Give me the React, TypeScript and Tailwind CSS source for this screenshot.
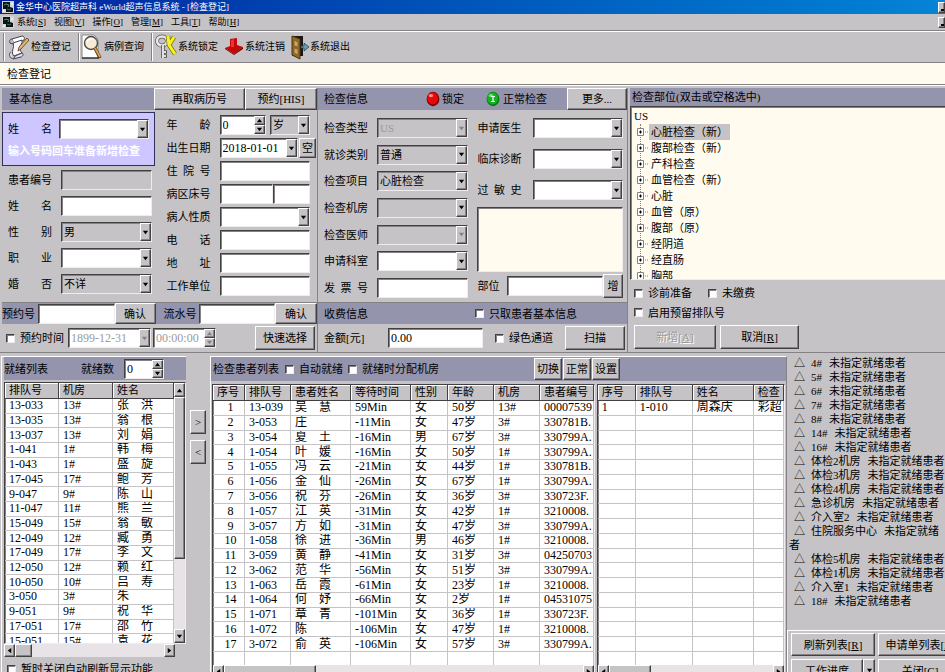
import { useState, type ReactNode } from "react";

const RAISED =
    "border border-t-white border-l-white border-b-[#424142] border-r-[#424142] bg-[#c6c3c6] shadow-[inset_-1px_-1px_0_#848284]";
const SUNKEN =
    "border border-t-[#424142] border-l-[#424142] border-b-[#efebef] border-r-[#efebef] shadow-[inset_1px_1px_0_#848284]";

const queueRows = [
    ["13-033", "13#", "张", "洪"],
    ["13-035", "13#", "翁", "根"],
    ["13-037", "13#", "刘", "娟"],
    ["1-041", "1#", "韩", "梅"],
    ["1-043", "1#", "盛", "旋"],
    ["17-045", "17#", "鲍", "芳"],
    ["9-047", "9#", "陈", "山"],
    ["11-047", "11#", "熊", "兰"],
    ["15-049", "15#", "翁", "敏"],
    ["12-049", "12#", "臧", "勇"],
    ["17-049", "17#", "李", "文"],
    ["12-050", "12#", "赖", "红"],
    ["10-050", "10#", "吕", "寿"],
    ["3-050", "3#", "朱", ""],
    ["9-051", "9#", "祝", "华"],
    ["17-051", "17#", "邵", "竹"],
    ["15-051", "15#", "袁", "花"],
];

const patientRows = [
    ["13-039", "吴", "慧", "59Min", "女", "50岁", "13#", "00007539"],
    ["3-053", "庄", "", "-11Min", "女", "47岁", "3#", "330781B."],
    ["3-054", "夏", "土", "-16Min", "男", "67岁", "3#", "330799A."],
    ["1-054", "叶", "媛", "-16Min", "女", "50岁", "1#", "330799A."],
    ["1-055", "冯", "云", "-21Min", "女", "44岁", "1#", "330781B."],
    ["1-056", "金", "仙", "-26Min", "女", "67岁", "1#", "330799A."],
    ["3-056", "祝", "芬", "-26Min", "女", "36岁", "3#", "330723F."],
    ["1-057", "江", "英", "-31Min", "女", "42岁", "1#", "3210008."],
    ["3-057", "方", "如", "-31Min", "女", "47岁", "3#", "330799A."],
    ["1-058", "徐", "进", "-36Min", "男", "46岁", "1#", "3210008."],
    ["3-059", "黄", "静", "-41Min", "女", "31岁", "3#", "04250703"],
    ["3-062", "范", "华", "-56Min", "女", "51岁", "3#", "330799A."],
    ["1-063", "岳", "霞", "-61Min", "女", "23岁", "1#", "3210008."],
    ["1-064", "何", "妤", "-66Min", "女", "2岁", "1#", "04531075"],
    ["1-071", "章", "青", "-101Min", "女", "36岁", "1#", "330723F."],
    ["1-072", "陈", "", "-106Min", "女", "47岁", "1#", "3210008."],
    ["3-072", "俞", "英", "-106Min", "女", "57岁", "3#", "330799A."],
];

const treeItems = [
    "心脏检查（新）",
    "腹部检查（新）",
    "产科检查",
    "血管检查（新）",
    "心脏",
    "血管（原）",
    "腹部（原）",
    "经阴道",
    "经直肠",
    "胸部",
];

const notices = [
    "4#",
    "5#",
    "6#",
    "7#",
    "8#",
    "14#",
    "16#",
    "体检2机房",
    "体检3机房",
    "体检4机房",
    "急诊机房",
    "介入室2",
    "住院服务中心",
    "体检5机房",
    "体检1机房",
    "介入室1",
    "18#",
];

const menus = [
    ["系统", "S"],
    ["视图", "V"],
    ["操作", "O"],
    ["管理", "M"],
    ["工具", "T"],
    ["帮助", "H"],
];

function Btn({ children, className = "", disabled }: { children: ReactNode; className?: string; disabled?: boolean }) {
    return (
        <button
            disabled={disabled}
            className={`${RAISED} flex shrink-0 items-center justify-center whitespace-nowrap disabled:text-[#9c9a9c] disabled:[text-shadow:1px_1px_0_#fff] ${className}`}
        >
            {children}
        </button>
    );
}

function Caret({ dir = "down", muted }: { dir?: "up" | "down" | "left" | "right"; muted?: boolean }) {
    const points = {
        down: "1,2 7,2 4,6",
        up: "1,6 7,6 4,2",
        left: "6,1 6,7 2,4",
        right: "2,1 2,7 6,4",
    };
    return (
        <svg viewBox="0 0 8 8" className="h-[7px] w-[7px]">
            <polygon points={points[dir]} fill={muted ? "#848284" : "#000"} />
        </svg>
    );
}

function Combo({
    label,
    options = [""],
    gray,
    disabled,
    className = "flex-1",
}: {
    label: string;
    options?: string[];
    gray?: boolean;
    disabled?: boolean;
    className?: string;
}) {
    return (
        <div className={`${SUNKEN} relative h-5 min-w-0 ${gray ? "bg-[#c6c3c6]" : "bg-white"} ${className}`}>
            <select
                aria-label={label}
                disabled={disabled}
                className="block h-full w-full appearance-none bg-transparent pr-3 pl-[2px] outline-none disabled:text-[#9c9a9c]"
            >
                {options.map((o) => (
                    <option key={o}>{o}</option>
                ))}
            </select>
            <span
                className={`${RAISED} pointer-events-none absolute top-0 right-0 bottom-0 flex w-[11px] items-center justify-center`}
            >
                <Caret muted={disabled} />
            </span>
        </div>
    );
}

function TextBox({
    label,
    value = "",
    disabled,
    gray,
    className = "flex-1",
}: {
    label: string;
    value?: string;
    disabled?: boolean;
    gray?: boolean;
    className?: string;
}) {
    return (
        <input
            aria-label={label}
            defaultValue={value}
            disabled={disabled}
            className={`${SUNKEN} h-5 min-w-0 px-[2px] text-xs outline-none disabled:text-[#9c9a9c] ${gray ? "bg-[#c6c3c6]" : "bg-white"} ${className}`}
        />
    );
}

function Spinner({
    label,
    value,
    disabled,
    className = "",
}: {
    label: string;
    value: string;
    disabled?: boolean;
    className?: string;
}) {
    return (
        <div className={`${SUNKEN} flex h-5 min-w-0 bg-white ${className}`}>
            <input
                aria-label={label}
                defaultValue={value}
                disabled={disabled}
                className="min-w-0 flex-1 px-[2px] text-xs outline-none disabled:text-[#9c9a9c]"
            />
            <div className="flex w-[11px] shrink-0 flex-col">
                <button aria-label={`${label}+`} disabled={disabled} className={`${RAISED} flex flex-1 items-center justify-center`}>
                    <Caret dir="up" muted={disabled} />
                </button>
                <button aria-label={`${label}-`} disabled={disabled} className={`${RAISED} flex flex-1 items-center justify-center`}>
                    <Caret muted={disabled} />
                </button>
            </div>
        </div>
    );
}

function Check({ children, className = "" }: { children: ReactNode; className?: string }) {
    return (
        <label className={`flex items-center gap-[5px] whitespace-nowrap ${className}`}>
            <input type="checkbox" className={`${SUNKEN} h-[9px] w-[9px] appearance-none bg-white checked:bg-[#424142]`} />
            {children}
        </label>
    );
}

function Field({ label, children, gap = "gap-[7px]" }: { label: string; children: ReactNode; gap?: string }) {
    return (
        <div className={`flex h-5 items-center ${gap}`}>
            <span className="w-[46px] shrink-0 whitespace-pre">{label}</span>
            {children}
        </div>
    );
}

function ScrollBar({ vertical, thumb, className = "" }: { vertical?: boolean; thumb: string; className?: string }) {
    return (
        <div className={`flex shrink-0 bg-[#e7e3e7] ${vertical ? "w-[11px] flex-col" : "h-[13px]"} ${className}`}>
            <div className={`${RAISED} flex shrink-0 items-center justify-center ${vertical ? "h-[14px]" : "w-[11px]"}`}>
                <Caret dir={vertical ? "up" : "left"} />
            </div>
            <div className={`${RAISED} ${thumb}`} />
            <div className="flex-1" />
            <div className={`${RAISED} flex shrink-0 items-center justify-center ${vertical ? "h-[14px]" : "w-[11px]"}`}>
                <Caret dir={vertical ? "down" : "right"} />
            </div>
        </div>
    );
}

function Th({ children, className = "" }: { children?: ReactNode; className?: string }) {
    return (
        <th
            className={`h-4 overflow-hidden border-r border-b border-[#424142] bg-[#c6c3c6] p-0 pl-1 text-left text-[11px] font-normal whitespace-nowrap shadow-[inset_1px_1px_0_#fff] ${className}`}
        >
            {children}
        </th>
    );
}

function Td({ children, className = "" }: { children?: ReactNode; className?: string }) {
    return (
        <td className={`overflow-hidden border-r border-b border-[#c6c3c6] p-0 pl-1 whitespace-nowrap ${className}`}>
            {children}
        </td>
    );
}

function Name({ first, last }: { first: string; last: string }) {
    return (
        <span className="flex gap-[12px]">
            <span>{first}</span>
            <span>{last}</span>
        </span>
    );
}

function AppIcon() {
    return (
        <svg viewBox="0 0 12 12" className="h-3 w-3 shrink-0">
            <rect width="12" height="12" fill="#d6d3d6" />
            <path d="M1 1h7v5l3 1v4H4V8H1z" fill="#08140f" />
            <path d="M2 4l2-1 3 1-1 2" stroke="#5a8f84" fill="none" />
            <path d="M5 8l2 1 2-1" stroke="#3f6f60" fill="none" />
            <path d="M1 10h2M9 3h2" stroke="#fff" />
        </svg>
    );
}

function ScrollPenIcon() {
    return (
        <svg viewBox="0 0 22 26" className="h-[26px] w-[22px]">
            <path d="M4 5L14 2c2 0 3 2 2 4l-2 1-8 3z" fill="#fff" stroke="#42424f" />
            <path d="M5 9l9-3c1 4-3 6-2 10l2 3-8 3c-4-4 1-8-1-13z" fill="#f7f7ff" stroke="#42424f" />
            <path d="M4 5c-2 0-3 2-2 4 1 1 3 1 4 0" fill="#bdbdd6" stroke="#42424f" />
            <path d="M3 18c-2 1-2 4 0 6 2 1 4 0 4-2l7-3c2 1 1 3-1 4l-8 2" fill="#dedeef" stroke="#42424f" />
            <path d="M19 4l2 2-8 9-3 2 1-4z" fill="#e7b573" stroke="#5a3910" strokeWidth=".8" />
        </svg>
    );
}

function SearchDocIcon() {
    return (
        <svg viewBox="0 0 22 26" className="h-[26px] w-[22px]">
            <path d="M1 1h12l4 4v19H1z" fill="#fff" stroke="#8c8a8c" />
            <path d="M1 24h17" stroke="#000" />
            <circle cx="10" cy="9" r="6.500" fill="#f7ebd6" stroke="#4a4a4a" strokeWidth="1.4" />
            <path d="M6 8c1-3 3-4 6-3" stroke="#fff" strokeWidth="1.4" fill="none" />
            <path d="M14 14l5 10" stroke="#5a3910" strokeWidth="3.4" />
            <path d="M14 14l5 9" stroke="#d6a552" strokeWidth="1.8" />
        </svg>
    );
}

function KeysIcon() {
    return (
        <svg viewBox="0 0 22 26" className="h-[26px] w-[22px]">
            <ellipse cx="7" cy="7" rx="5" ry="4.500" fill="none" stroke="#5a595a" strokeWidth="4" />
            <ellipse cx="7" cy="7" rx="5" ry="4.500" fill="none" stroke="#e7e7e7" strokeWidth="2.6" />
            <path d="M8 11v13M8 18h4M8 22h4" stroke="#5a595a" strokeWidth="3.6" />
            <path d="M8 11v13M8 18h3M8 22h3" stroke="#dedfde" strokeWidth="2" />
            <path d="M13 2l1 9 6 9M19 3l-5 8" stroke="#73710a" strokeWidth="4.4" fill="none" />
            <path d="M13 2l1 9 6 9M19 3l-5 8" stroke="#f7f321" strokeWidth="3" fill="none" />
        </svg>
    );
}

function LogoffIcon() {
    return (
        <svg viewBox="0 0 20 18" className="h-[18px] w-5">
            <path d="M6 1l7-1v7l6 2-9 7-9-6 5-2z" fill="#c60808" />
            <path d="M1 10l9 6 9-7v2l-9 6-9-6z" fill="#730000" />
            <path d="M7 2l3-1v8H7z" fill="#ef3131" />
        </svg>
    );
}

function ExitIcon() {
    return (
        <svg viewBox="0 0 18 26" className="h-[26px] w-[18px]">
            <path d="M1 2h11v20H1z" fill="#181818" />
            <path d="M1 2l8 3v20l-8-4z" fill="#946b29" stroke="#4a3108" />
            <path d="M3 6l4 2v5l-4-1zM3 14l4 1v6l-4-2z" fill="#c6a563" stroke="#6b4a18" strokeWidth=".6" />
            <path d="M10 12h3V9l5 4-5 4v-3h-3z" fill="#6b9cb5" stroke="#18394a" strokeWidth=".7" />
        </svg>
    );
}

function Bulb({ green }: { green?: boolean }) {
    return (
        <svg viewBox="0 0 14 16" className="h-4 w-[14px]">
            <ellipse cx="7" cy="8" rx="6.4" ry="7.2" fill={green ? "#087b10" : "#7b0000"} />
            <ellipse cx="6.6" cy="7.4" rx="5.4" ry="6.2" fill={green ? "#10b521" : "#e70808"} />
            <ellipse cx="5" cy="4.6" rx="2.2" ry="1.6" fill={green ? "#73e77b" : "#ff8c84"} />
            {green && <path d="M5 5.500h4M5 10.500h4M7 5.500v5" stroke="#fff" strokeWidth="1.2" />}
        </svg>
    );
}

function ToolButton({ icon, children, className = "" }: { icon: ReactNode; children: ReactNode; className?: string }) {
    return (
        <button className={`flex items-center gap-[1px] text-[10px] whitespace-nowrap ${className}`}>
            {icon}
            {children}
        </button>
    );
}

function ToolSeparator() {
    return <span className="h-7 w-[2px] border-l border-[#848284] bg-white" />;
}

function BasicInfo() {
    return (
        <section className="flex min-w-0 flex-col border-r border-[#848284]">
            <div className="flex h-[22px] bg-[#9494ad]">
                <h2 className="flex flex-1 items-center pl-[7px]">基本信息</h2>
                <Btn className="w-[91px]">再取病历号</Btn>
                <Btn className="w-[72px]">预约[HIS]</Btn>
            </div>
            <div className="grid flex-1 grid-cols-[minmax(0,153fr)_minmax(0,163fr)] pt-[2px]">
                <div>
                    <div className="h-[54px] border border-[#31305a] bg-[#cec7ff] pt-[6px] pr-[5px] pl-[5px]">
                        <Field label="姓　　名" gap="gap-[5px]">
                            <Combo label="姓名检索" />
                        </Field>
                        <p className="mt-[5px] font-bold whitespace-nowrap text-white">输入号码回车准备新增检查</p>
                    </div>
                    <div className="flex flex-col gap-[6px] pt-1 pr-[3px] pl-[6px]">
                        <Field label="患者编号">
                            <TextBox label="患者编号" gray />
                        </Field>
                        <Field label="姓　　名">
                            <TextBox label="姓名" />
                        </Field>
                        <Field label="性　　别">
                            <Combo label="性别" gray options={["男", "女"]} />
                        </Field>
                        <Field label="职　　业">
                            <Combo label="职业" />
                        </Field>
                        <Field label="婚　　否">
                            <Combo label="婚否" gray options={["不详", "已婚", "未婚"]} />
                        </Field>
                    </div>
                </div>
                <div className="flex min-w-0 flex-col gap-[3px] pt-[3px] pr-[7px] pl-3">
                    <Field label="年　　龄">
                        <Spinner label="年龄" value="0" className="flex-1" />
                        <Combo label="年龄单位" gray options={["岁", "月", "天"]} className="-ml-[3px] w-10" />
                    </Field>
                    <div className="-mr-[6px]">
                        <Field label="出生日期">
                            <Combo label="出生日期" options={["2018-01-01"]} className="flex-1 text-xs" />
                            <Btn className="-ml-[6px] h-5 w-[17px]">空</Btn>
                        </Field>
                    </div>
                    <Field label="住  院  号">
                        <TextBox label="住院号" />
                    </Field>
                    <Field label="病区床号">
                        <div className="flex min-w-0 flex-1">
                            <TextBox label="病区" className="w-[53px]" />
                            <TextBox label="床号" />
                        </div>
                    </Field>
                    <Field label="病人性质">
                        <Combo label="病人性质" />
                    </Field>
                    <Field label="电　　话">
                        <TextBox label="电话" />
                    </Field>
                    <Field label="地　　址">
                        <TextBox label="地址" />
                    </Field>
                    <Field label="工作单位">
                        <TextBox label="工作单位" />
                    </Field>
                </div>
            </div>
            <div className="flex h-[22px] items-center border-t border-[#848284] bg-[#9494ad]">
                <span className="w-9 shrink-0 whitespace-nowrap">预约号</span>
                <TextBox label="预约号" />
                <Btn className="h-[21px] w-[41px]">确认</Btn>
                <span className="w-[43px] shrink-0 pl-2 whitespace-nowrap">流水号</span>
                <TextBox label="流水号" />
                <Btn className="h-[21px] w-[42px]">确认</Btn>
            </div>
            <div className="flex h-[28px] items-center pr-[2px] pl-1">
                <Check>预约时间</Check>
                <Combo label="预约日期" disabled options={["1899-12-31"]} className="ml-1 w-[83px] text-xs" />
                <Spinner label="预约时刻" disabled value="00:00:00" className="ml-[2px] w-[63px]" />
                <Btn className="ml-auto h-6 w-[60px]">快速选择</Btn>
            </div>
        </section>
    );
}

function ExamInfo() {
    return (
        <section className="flex min-w-0 flex-col border-r border-[#848284]">
            <div className="flex h-[22px] items-center bg-[#9494ad]">
                <h2 className="pl-[6px]">检查信息</h2>
                <span className="ml-auto flex items-center gap-[2px]">
                    <Bulb />
                    锁定
                </span>
                <span className="mr-5 ml-[22px] flex items-center gap-[3px]">
                    <Bulb green />
                    正常检查
                </span>
                <Btn className="h-full w-[60px]">更多...</Btn>
            </div>
            <div className="grid flex-1 grid-cols-[minmax(0,151fr)_minmax(0,157fr)]">
                <div className="flex flex-col justify-between pt-2 pr-[1px] pb-1 pl-[6px]">
                    <Field label="检查类型">
                        <Combo label="检查类型" gray disabled options={["US"]} />
                    </Field>
                    <Field label="就诊类别">
                        <Combo label="就诊类别" gray options={["普通", "急诊"]} />
                    </Field>
                    <Field label="检查项目">
                        <Combo label="检查项目" gray options={["心脏检查"]} />
                    </Field>
                    <Field label="检查机房">
                        <Combo label="检查机房" gray />
                    </Field>
                    <Field label="检查医师">
                        <Combo label="检查医师" gray disabled />
                    </Field>
                    <Field label="申请科室">
                        <Combo label="申请科室" />
                    </Field>
                    <Field label="发  票  号">
                        <TextBox label="发票号" />
                    </Field>
                </div>
                <div className="flex flex-col pt-2 pr-1 pb-1 pl-[8px]">
                    <div className="flex flex-col gap-[11px]">
                        <Field label="申请医生" gap="gap-[10px]">
                            <Combo label="申请医生" />
                        </Field>
                        <Field label="临床诊断" gap="gap-[10px]">
                            <Combo label="临床诊断" />
                        </Field>
                        <Field label="过  敏  史" gap="gap-[10px]">
                            <Combo label="过敏史" />
                        </Field>
                    </div>
                    <textarea
                        aria-label="检查备注"
                        className={`${SUNKEN} mt-[7px] min-h-0 flex-1 resize-none bg-[#fffbef] outline-none`}
                    />
                    <div className="mt-[2px] flex items-center">
                        <span className="w-[30px] shrink-0">部位</span>
                        <TextBox label="部位" />
                        <Btn className="h-6 w-5">增</Btn>
                    </div>
                </div>
            </div>
            <div className="flex h-[22px] items-center border-t border-[#848284] bg-[#9494ad] pl-[6px]">
                <h2>收费信息</h2>
                <Check className="mr-[50px] ml-auto">只取患者基本信息</Check>
            </div>
            <div className="flex h-[28px] items-center pr-[2px] pl-[6px]">
                <span className="w-16 shrink-0">金额[元]</span>
                <TextBox label="金额" value="0.00" />
                <Check className="mx-3">绿色通道</Check>
                <Btn className="h-6 w-[60px]">扫描</Btn>
            </div>
        </section>
    );
}

function BodyParts() {
    const [selected, setSelected] = useState(treeItems[0]);

    return (
        <section className="flex min-w-0 flex-col pl-[2px]">
            <h2 className="flex h-[18px] items-center bg-[#9494ad] pl-[2px]">检查部位(双击或空格选中)</h2>
            <div className={`${SUNKEN} h-[174px] overflow-hidden border-r-0 bg-[#fffbef] pt-[1px] pl-[3px]`}>
                <div className="h-4 leading-4">US</div>
                <ul className="ml-[6px] border-l border-dotted border-[#848284]">
                    {treeItems.map((item) => (
                        <li key={item} className="flex h-4 items-center">
                            <svg viewBox="0 0 12 8" className="-ml-1 h-2 w-3 shrink-0">
                                <path d="M.5 .5h6v7h-6z" fill="#fff" stroke="#848284" />
                                <path d="M2 4h3M3.500 2.500v3" stroke="#000" />
                                <path d="M8 4h4" stroke="#848284" strokeDasharray="1 1" />
                            </svg>
                            <button
                                onClick={() => setSelected(item)}
                                className={`h-4 px-[2px] leading-4 ${item === selected ? "bg-[#c6c3c6]" : ""}`}
                            >
                                {item}
                            </button>
                        </li>
                    ))}
                </ul>
            </div>
            <div className="flex flex-1 flex-col justify-between pt-[6px] pb-[3px] pl-1">
                <div className="flex gap-4">
                    <Check>诊前准备</Check>
                    <Check>未缴费</Check>
                </div>
                <Check>启用预留排队号</Check>
                <div className="flex gap-1">
                    <Btn disabled className="h-6 w-[82px]">
                        新增[<u>A</u>]
                    </Btn>
                    <Btn className="h-6 w-[79px]">
                        取消[<u>R</u>]
                    </Btn>
                </div>
            </div>
        </section>
    );
}

function ReadyList() {
    return (
        <section className="w-[185px] shrink-0 border-t border-l border-white pl-[2px]">
            <div className="flex h-[23px] items-center bg-[#9494ad]">
                <h2>就绪列表</h2>
                <span className="mr-[10px] ml-auto">就绪数</span>
                <Spinner label="就绪数" value="0" className="mr-[22px] w-10" />
            </div>
            <div className={`${SUNKEN} mt-[2px] flex h-[262px] bg-white`}>
                <div className="min-w-0 flex-1 overflow-hidden">
                    <table className="h-[266px] w-full table-fixed border-separate border-spacing-0 text-xs leading-[13px]">
                        <thead>
                            <tr>
                                <Th className="w-[54px]">排队号</Th>
                                <Th className="w-[54px]">机房</Th>
                                <Th>姓名</Th>
                            </tr>
                        </thead>
                        <tbody>
                            {queueRows.map((row) => (
                                <tr key={row[0]}>
                                    <Td>{row[0]}</Td>
                                    <Td>{row[1]}</Td>
                                    <Td>
                                        <Name first={row[2]} last={row[3]} />
                                    </Td>
                                </tr>
                            ))}
                        </tbody>
                    </table>
                </div>
                <ScrollBar vertical thumb="h-[162px]" />
            </div>
            <ScrollBar thumb="w-[17px]" className="mr-[11px]" />
            <Check className="mt-[5px] ml-[3px]">暂时关闭自动刷新显示功能</Check>
        </section>
    );
}

function PatientList() {
    return (
        <section className="flex min-w-0 flex-1 flex-col border-t border-r border-l border-t-white border-r-[#848284] border-l-white">
            <div className="flex h-[24px] items-center bg-[#9494ad] pl-[2px]">
                <h2 className="mr-[6px]">检查患者列表</h2>
                <Check className="mr-[5px]">自动就绪</Check>
                <Check>就绪时分配机房</Check>
                <div className="mr-[166px] ml-auto flex gap-[1px]">
                    <Btn className="h-[22px] w-7">切换</Btn>
                    <Btn className="h-[22px] w-7">正常</Btn>
                    <Btn className="h-[22px] w-7">设置</Btn>
                </div>
            </div>
            <div className="mt-[3px] grid grid-cols-[minmax(0,382fr)_minmax(0,188fr)] gap-[2px] px-[1px]">
                <div className={`${SUNKEN} min-w-0 overflow-hidden bg-white`}>
                    <div className="h-[280px] overflow-hidden">
                        <table className="h-[282px] w-full table-fixed border-separate border-spacing-0 text-xs leading-[13px]">
                            <thead>
                                <tr>
                                    <Th className="w-8">序号</Th>
                                    <Th className="w-[46px]">排队号</Th>
                                    <Th className="w-[60px]">患者姓名</Th>
                                    <Th className="w-[60px]">等待时间</Th>
                                    <Th className="w-[37px]">性别</Th>
                                    <Th className="w-[46px]">年龄</Th>
                                    <Th className="w-[46px]">机房</Th>
                                    <Th>患者编号</Th>
                                </tr>
                            </thead>
                            <tbody>
                                {patientRows.map((row, i) => (
                                    <tr key={row[0]}>
                                        <Td className="text-center">{i + 1}</Td>
                                        <Td>{row[0]}</Td>
                                        <Td>
                                            <Name first={row[1]} last={row[2]} />
                                        </Td>
                                        <Td>{row[3]}</Td>
                                        <Td>{row[4]}</Td>
                                        <Td>{row[5]}</Td>
                                        <Td>{row[6]}</Td>
                                        <Td>{row[7]}</Td>
                                    </tr>
                                ))}
                                <tr>
                                    {patientRows[0].map((_, i) => (
                                        <Td key={i}>&nbsp;</Td>
                                    ))}
                                </tr>
                            </tbody>
                        </table>
                    </div>
                    <ScrollBar thumb="w-[92px]" />
                </div>
                <div className={`${SUNKEN} min-w-0 overflow-hidden bg-white`}>
                    <div className="h-[280px] overflow-hidden">
                        <table className="h-[282px] w-full table-fixed border-separate border-spacing-0 text-xs leading-[13px]">
                            <thead>
                                <tr>
                                    <Th className="w-[38px]">序号</Th>
                                    <Th className="w-[57px]">排队号</Th>
                                    <Th className="w-[61px]">姓名</Th>
                                    <Th>检查</Th>
                                </tr>
                            </thead>
                            <tbody>
                                <tr>
                                    <Td>1</Td>
                                    <Td>1-010</Td>
                                    <Td>周森庆</Td>
                                    <Td>彩超</Td>
                                </tr>
                                {patientRows.map((row) => (
                                    <tr key={row[0]}>
                                        <Td>&nbsp;</Td>
                                        <Td />
                                        <Td />
                                        <Td />
                                    </tr>
                                ))}
                            </tbody>
                        </table>
                    </div>
                    <ScrollBar thumb="w-[42px]" />
                </div>
            </div>
        </section>
    );
}

function NoticePanel() {
    return (
        <aside className="flex w-[158px] shrink-0 flex-col overflow-hidden">
            <ul className="h-[274px] shrink-0 pl-[2px] leading-[14px] whitespace-nowrap">
                {notices.map((room) => (
                    <li key={room}>
                        <span className="flex gap-[7px] pl-[5px]">
                            <span className="w-[10px] shrink-0">△</span>
                            <span>{room}</span>
                            <span>未指定就绪{room === "住院服务中心" ? "" : "患者"}</span>
                        </span>
                        {room === "住院服务中心" && "者"}
                    </li>
                ))}
            </ul>
            <div className="grid w-[180px] grid-cols-[84px_84px] gap-x-[3px] gap-y-[3px] border-t border-l border-white pt-[2px] pl-[3px]">
                <Btn className="h-[23px]">
                    刷新列表[<u>R</u>]
                </Btn>
                <Btn className="h-[23px]">
                    申请单列表[<u>L</u>]
                </Btn>
                <div className="flex">
                    <Btn className="h-[23px] flex-1">工作进度</Btn>
                    <Btn className="h-[23px] w-3">
                        <Caret />
                    </Btn>
                </div>
                <Btn className="h-[23px]">
                    关闭[<u>C</u>]
                </Btn>
            </div>
        </aside>
    );
}

export default function App() {
    return (
        <div className="flex h-screen flex-col overflow-hidden bg-[#c6c3c6] font-['Liberation_Serif','Noto_Sans_CJK_SC',serif] text-[11px] leading-[14px] text-black">
            <header className="flex h-[14px] shrink-0 items-center gap-[2px] overflow-hidden bg-linear-to-r from-[#0020a0] to-[#0884d6] pl-[2px] text-[9px] text-white">
                <AppIcon />
                <h1 className="flex-1 whitespace-nowrap">金华中心医院超声科 eWorld超声信息系统 - [检查登记]</h1>
                <button aria-label="最小化" className={`${RAISED} flex h-[11px] w-[7px] items-end pb-[1px] pl-[2px]`}>
                    <span className="h-[2px] w-full bg-black" />
                </button>
            </header>
            <nav className="flex h-[17px] shrink-0 items-center border-b border-[#848284] pl-[2px] text-[9px]">
                <AppIcon />
                <div className="ml-[3px] flex flex-1 gap-2">
                    {menus.map(([name, key]) => (
                        <button key={key} className="whitespace-nowrap">
                            {name}[<u>{key}</u>]
                        </button>
                    ))}
                </div>
                <button aria-label="最小化窗口" className={`${RAISED} flex h-[11px] w-[7px] items-end pb-[1px] pl-[2px]`}>
                    <span className="h-[2px] w-full bg-black" />
                </button>
            </nav>
            <div className="flex h-8 shrink-0 items-center border-t border-b border-t-white border-b-[#848284] pl-[3px]">
                <ToolSeparator />
                <ToolButton icon={<ScrollPenIcon />} className="mr-[7px] ml-[3px]">
                    检查登记
                </ToolButton>
                <ToolSeparator />
                <ToolButton icon={<SearchDocIcon />} className="mr-[7px] ml-[1px]">
                    病例查询
                </ToolButton>
                <ToolSeparator />
                <ToolButton icon={<KeysIcon />} className="ml-[2px]">
                    系统锁定
                </ToolButton>
                <ToolButton icon={<LogoffIcon />} className="ml-[6px]">
                    系统注销
                </ToolButton>
                <ToolButton icon={<ExitIcon />} className="ml-[6px]">
                    系统退出
                </ToolButton>
            </div>
            <div className="flex h-[21px] shrink-0 items-center bg-[#fffbef] pl-[7px]">检查登记</div>
            <main className="flex min-h-0 flex-1 flex-col overflow-hidden border-t border-[#848284]">
                <div className="grid h-[268px] shrink-0 grid-cols-[minmax(0,316fr)_minmax(0,310fr)_minmax(0,317fr)] border-t border-b border-t-white border-b-[#848284] pt-[2px] pl-[2px]">
                    <BasicInfo />
                    <ExamInfo />
                    <BodyParts />
                </div>
                <div className="flex pt-[3px] pl-[1px]">
                    <ReadyList />
                    <div className="flex w-[24px] shrink-0 flex-col items-center gap-[6px] pt-[54px]">
                        <Btn className="h-6 w-4">&gt;</Btn>
                        <Btn className="h-6 w-4">&lt;</Btn>
                    </div>
                    <PatientList />
                    <NoticePanel />
                </div>
            </main>
        </div>
    );
}
